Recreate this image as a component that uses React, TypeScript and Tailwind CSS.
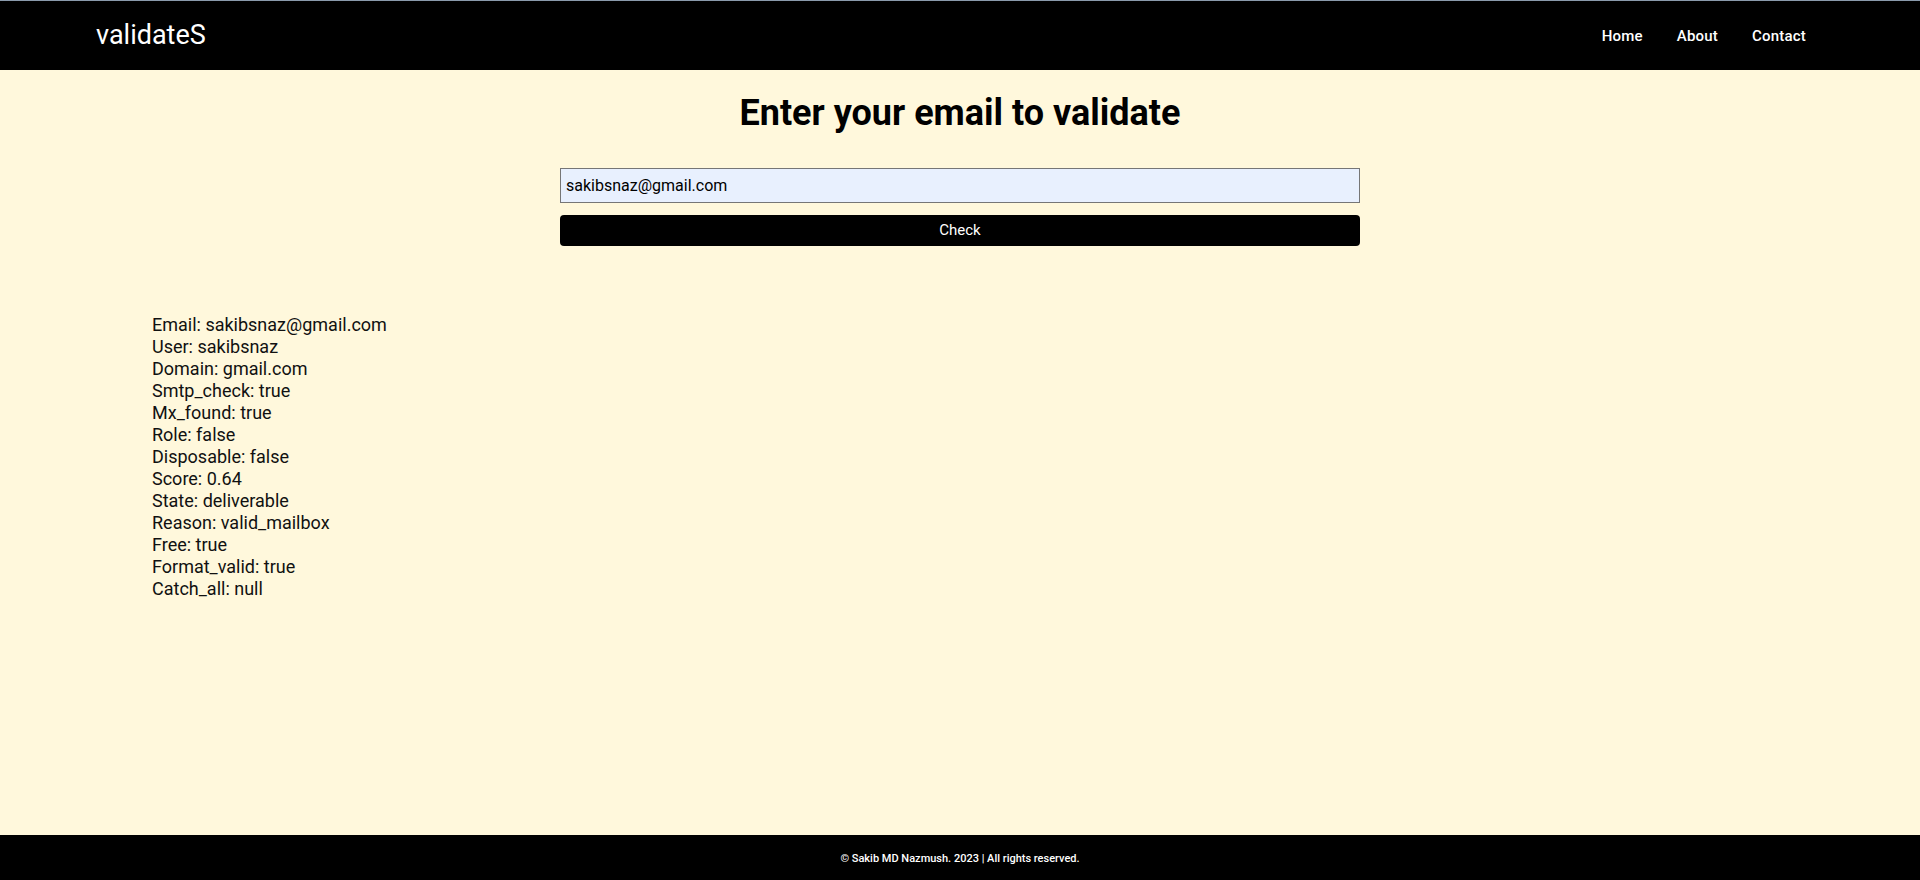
import React, { useState } from 'react';

const result: [string, string][] = [
  ['Email', 'sakibsnaz@gmail.com'],
  ['User', 'sakibsnaz'],
  ['Domain', 'gmail.com'],
  ['Smtp_check', 'true'],
  ['Mx_found', 'true'],
  ['Role', 'false'],
  ['Disposable', 'false'],
  ['Score', '0.64'],
  ['State', 'deliverable'],
  ['Reason', 'valid_mailbox'],
  ['Free', 'true'],
  ['Format_valid', 'true'],
  ['Catch_all', 'null'],
];

const App: React.FC = () => {
  const [email, setEmail] = useState('sakibsnaz@gmail.com');

  return (
    <div className="min-h-screen flex flex-col bg-[#fff8dc] font-['Roboto',sans-serif]">
      <header className="h-[70px] shrink-0 bg-black border-t border-[#8a9aab] flex items-center justify-between pl-[96px] pr-[114px]">
        <a href="#" className="text-white text-[27px] leading-none">validateS</a>
        <nav className="flex items-center gap-[34px] pt-[2px]">
          <a href="#" className="text-white text-[15px] font-medium tracking-[0.2px]">Home</a>
          <a href="#" className="text-white text-[15px] font-medium tracking-[0.2px]">About</a>
          <a href="#" className="text-white text-[15px] font-medium tracking-[0.2px]">Contact</a>
        </nav>
      </header>

      <main className="flex-1">
        <h1 className="text-center text-[36px] font-bold text-black mt-[22px] leading-[42px]">
          Enter your email to validate
        </h1>
        <form className="w-[800px] mx-auto mt-[34px] flex flex-col gap-[12px]" onSubmit={e => e.preventDefault()}>
          <input
            type="email"
            value={email}
            onChange={e => setEmail(e.target.value)}
            className="h-[35px] w-full bg-[#e8f0fe] border border-[#767676] px-[5px] text-[16px] text-black outline-none"
          />
          <button type="submit" className="h-[31px] w-full bg-black text-white text-[15px] rounded-[4px]">
            Check
          </button>
        </form>

        <div className="mt-[68px] pl-[152px] text-[18px] leading-[22px] text-[#111]">
          {result.map(([k, v]) => (
            <p key={k}>{k}: {v}</p>
          ))}
        </div>
      </main>

      <footer className="h-[45px] shrink-0 bg-black flex items-center justify-center pt-[3px]">
        <p className="text-white text-[11px] font-medium">© Sakib MD Nazmush. 2023 | All rights reserved.</p>
      </footer>
    </div>
  );
};

export default App;
